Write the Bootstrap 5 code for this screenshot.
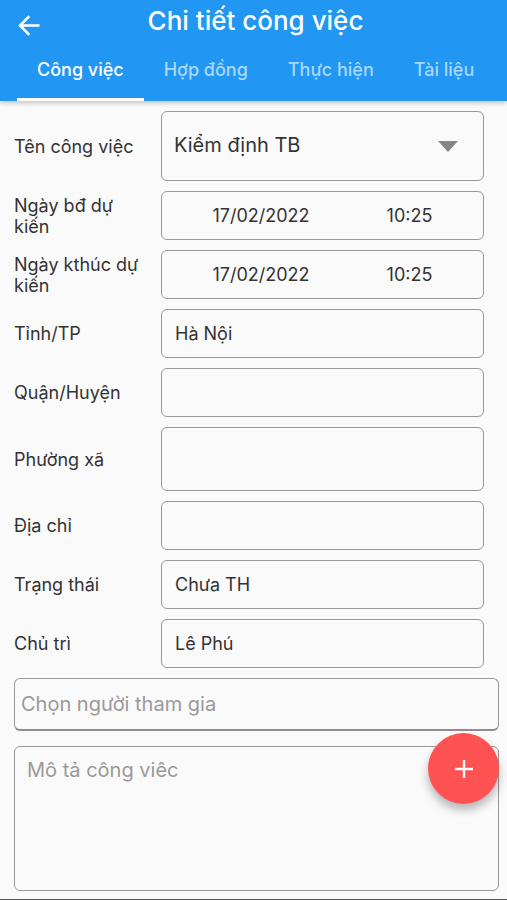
<!DOCTYPE html>
<html lang="vi">
<head>
<meta charset="utf-8">
<meta name="viewport" content="width=device-width, initial-scale=1">
<title>Chi tiết công việc</title>
<link href="https://cdn.jsdelivr.net/npm/bootstrap@5.3.0/dist/css/bootstrap.min.css" rel="stylesheet">
<style>
  body { font-family: Inter, "Noto Sans", sans-serif; font-size: 18px; line-height: 21px; color: #333; background: #fafafa; }
  .app { border-bottom: 1px solid #555; }
  .app-header { background: #2196f3; box-shadow: 0 2px 5px rgba(0,0,0,.22); }
  .title-bar { display: grid; grid-template-columns: 32px 1fr 32px; height: 42px; padding: 0 10px 0 14px; }
  .title-bar h1 { font-size: 26px; line-height: 42px; font-weight: 500; }
  .back { margin-top: 8px; }
  .tabs { height: 59px; padding-left: 17px; }
  .tabs .nav-link { padding: 17px 20px 0; height: 59px; font-weight: 500; line-height: 21px; color: #a9d8fb; border-bottom: 3px solid transparent; border-radius: 0; white-space: nowrap; }
  .tabs .nav-link.active { color: #fff; border-color: #fff; }
  .job-form { padding: 10px 8px 8px 14px; }
  .field-list { gap: 10px; padding-right: 15px; }
  .field-row { display: grid; grid-template-columns: 147px 1fr; align-items: center; }
  .field-row label { padding-right: 16px; }
  .box, .box.form-control, .box.form-select { border: 1px solid #999; border-radius: 6px; background-color: transparent; color: #333; font-size: 18px; line-height: 21px; height: 49px; padding: 0 13px; }
  .box.ward { height: 64px; }
  .box.job-name { height: 70px; font-size: 20px; line-height: 24px; padding: 0 48px 2px 12px;
    background-image: url("data:image/svg+xml,%3Csvg xmlns='http://www.w3.org/2000/svg' viewBox='0 0 20 11'%3E%3Cpath d='M0 0h20L10 11z' fill='%23858585'/%3E%3C/svg%3E");
    background-size: 20px 11px; background-position: right 25px center; }
  .date-time { display: grid; grid-template-columns: 2fr 1fr; padding-right: 24px !important; padding-left: 0 !important; }
  .date-time input { min-width: 0; width: 100%; color: inherit; }
  .box.people { height: 53px; margin-top: 10px; font-size: 20px; padding: 0 6px; border-bottom: 2px solid #8c8c8c; }
  .box.description { height: 145px; font-size: 20px; line-height: 24px; padding: 11px 12px; resize: none; display: block; }
  .description-wrap { margin-top: 15px; }
  .box::placeholder { color: #999; opacity: 1; }
  .add { position: absolute; top: -13px; right: 0; width: 71px; height: 71px; background: #ff5252; box-shadow: 0 6px 10px rgba(0,0,0,.28); }
</style>
<script src="https://cdn.jsdelivr.net/npm/bootstrap@5.3.0/dist/js/bootstrap.bundle.min.js"></script>
</head>
<body>
<div class="app min-vh-100">
  <header class="app-header position-relative">
    <div class="title-bar">
      <button type="button" class="back btn p-0 border-0 text-white d-flex align-items-center" aria-label="Quay lại">
        <svg width="32" height="32" viewBox="0 0 32 32" fill="none" stroke="currentColor" stroke-width="2.6"><path d="M25.5 16.5H7M15.3 7.2L6 16.5l9.3 9.3"/></svg>
      </button>
      <h1 class="m-0 text-center text-white">Chi tiết công việc</h1>
    </div>
    <nav class="tabs nav flex-nowrap" aria-label="Mục">
      <a class="nav-link active" aria-current="page" href="#cong-viec">Công việc</a>
      <a class="nav-link" href="#hop-dong">Hợp đồng</a>
      <a class="nav-link" href="#thuc-hien">Thực hiện</a>
      <a class="nav-link" href="#tai-lieu">Tài liệu</a>
    </nav>
  </header>
  <form class="job-form" id="cong-viec">
    <div class="field-list d-flex flex-column">
      <div class="field-row">
        <label for="name">Tên công việc</label>
        <select class="box job-name form-select" id="name"><option>Kiểm định TB</option></select>
      </div>
      <div class="field-row">
        <label for="start">Ngày bđ dự kiến</label>
        <div class="box date-time">
          <input class="border-0 bg-transparent text-center p-0" id="start" value="17/02/2022">
          <input class="border-0 bg-transparent text-center p-0" aria-label="Giờ bđ dự kiến" value="10:25">
        </div>
      </div>
      <div class="field-row">
        <label for="end">Ngày kthúc dự kiến</label>
        <div class="box date-time">
          <input class="border-0 bg-transparent text-center p-0" id="end" value="17/02/2022">
          <input class="border-0 bg-transparent text-center p-0" aria-label="Giờ kthúc dự kiến" value="10:25">
        </div>
      </div>
      <div class="field-row">
        <label for="province">Tỉnh/TP</label>
        <input class="box form-control" id="province" value="Hà Nội">
      </div>
      <div class="field-row">
        <label for="district">Quận/Huyện</label>
        <input class="box form-control" id="district">
      </div>
      <div class="field-row">
        <label for="ward">Phường xã</label>
        <input class="box ward form-control" id="ward">
      </div>
      <div class="field-row">
        <label for="address">Địa chỉ</label>
        <input class="box form-control" id="address">
      </div>
      <div class="field-row">
        <label for="status">Trạng thái</label>
        <input class="box form-control" id="status" value="Chưa TH">
      </div>
      <div class="field-row">
        <label for="owner">Chủ trì</label>
        <input class="box form-control" id="owner" value="Lê Phú">
      </div>
    </div>
    <input class="box people form-control" aria-label="Chọn người tham gia" placeholder="Chọn người tham gia">
    <div class="description-wrap position-relative">
      <textarea class="box description form-control" aria-label="Mô tả công việc" placeholder="Mô tả công viêc"></textarea>
      <button type="button" class="add btn border-0 rounded-circle p-0 d-flex align-items-center justify-content-center text-white" aria-label="Thêm">
        <svg width="20" height="20" viewBox="0 0 20 20" stroke="currentColor" stroke-width="2.4"><path d="M10 1v18M1 10h18"/></svg>
      </button>
    </div>
  </form>
</div>
</body>
</html>
